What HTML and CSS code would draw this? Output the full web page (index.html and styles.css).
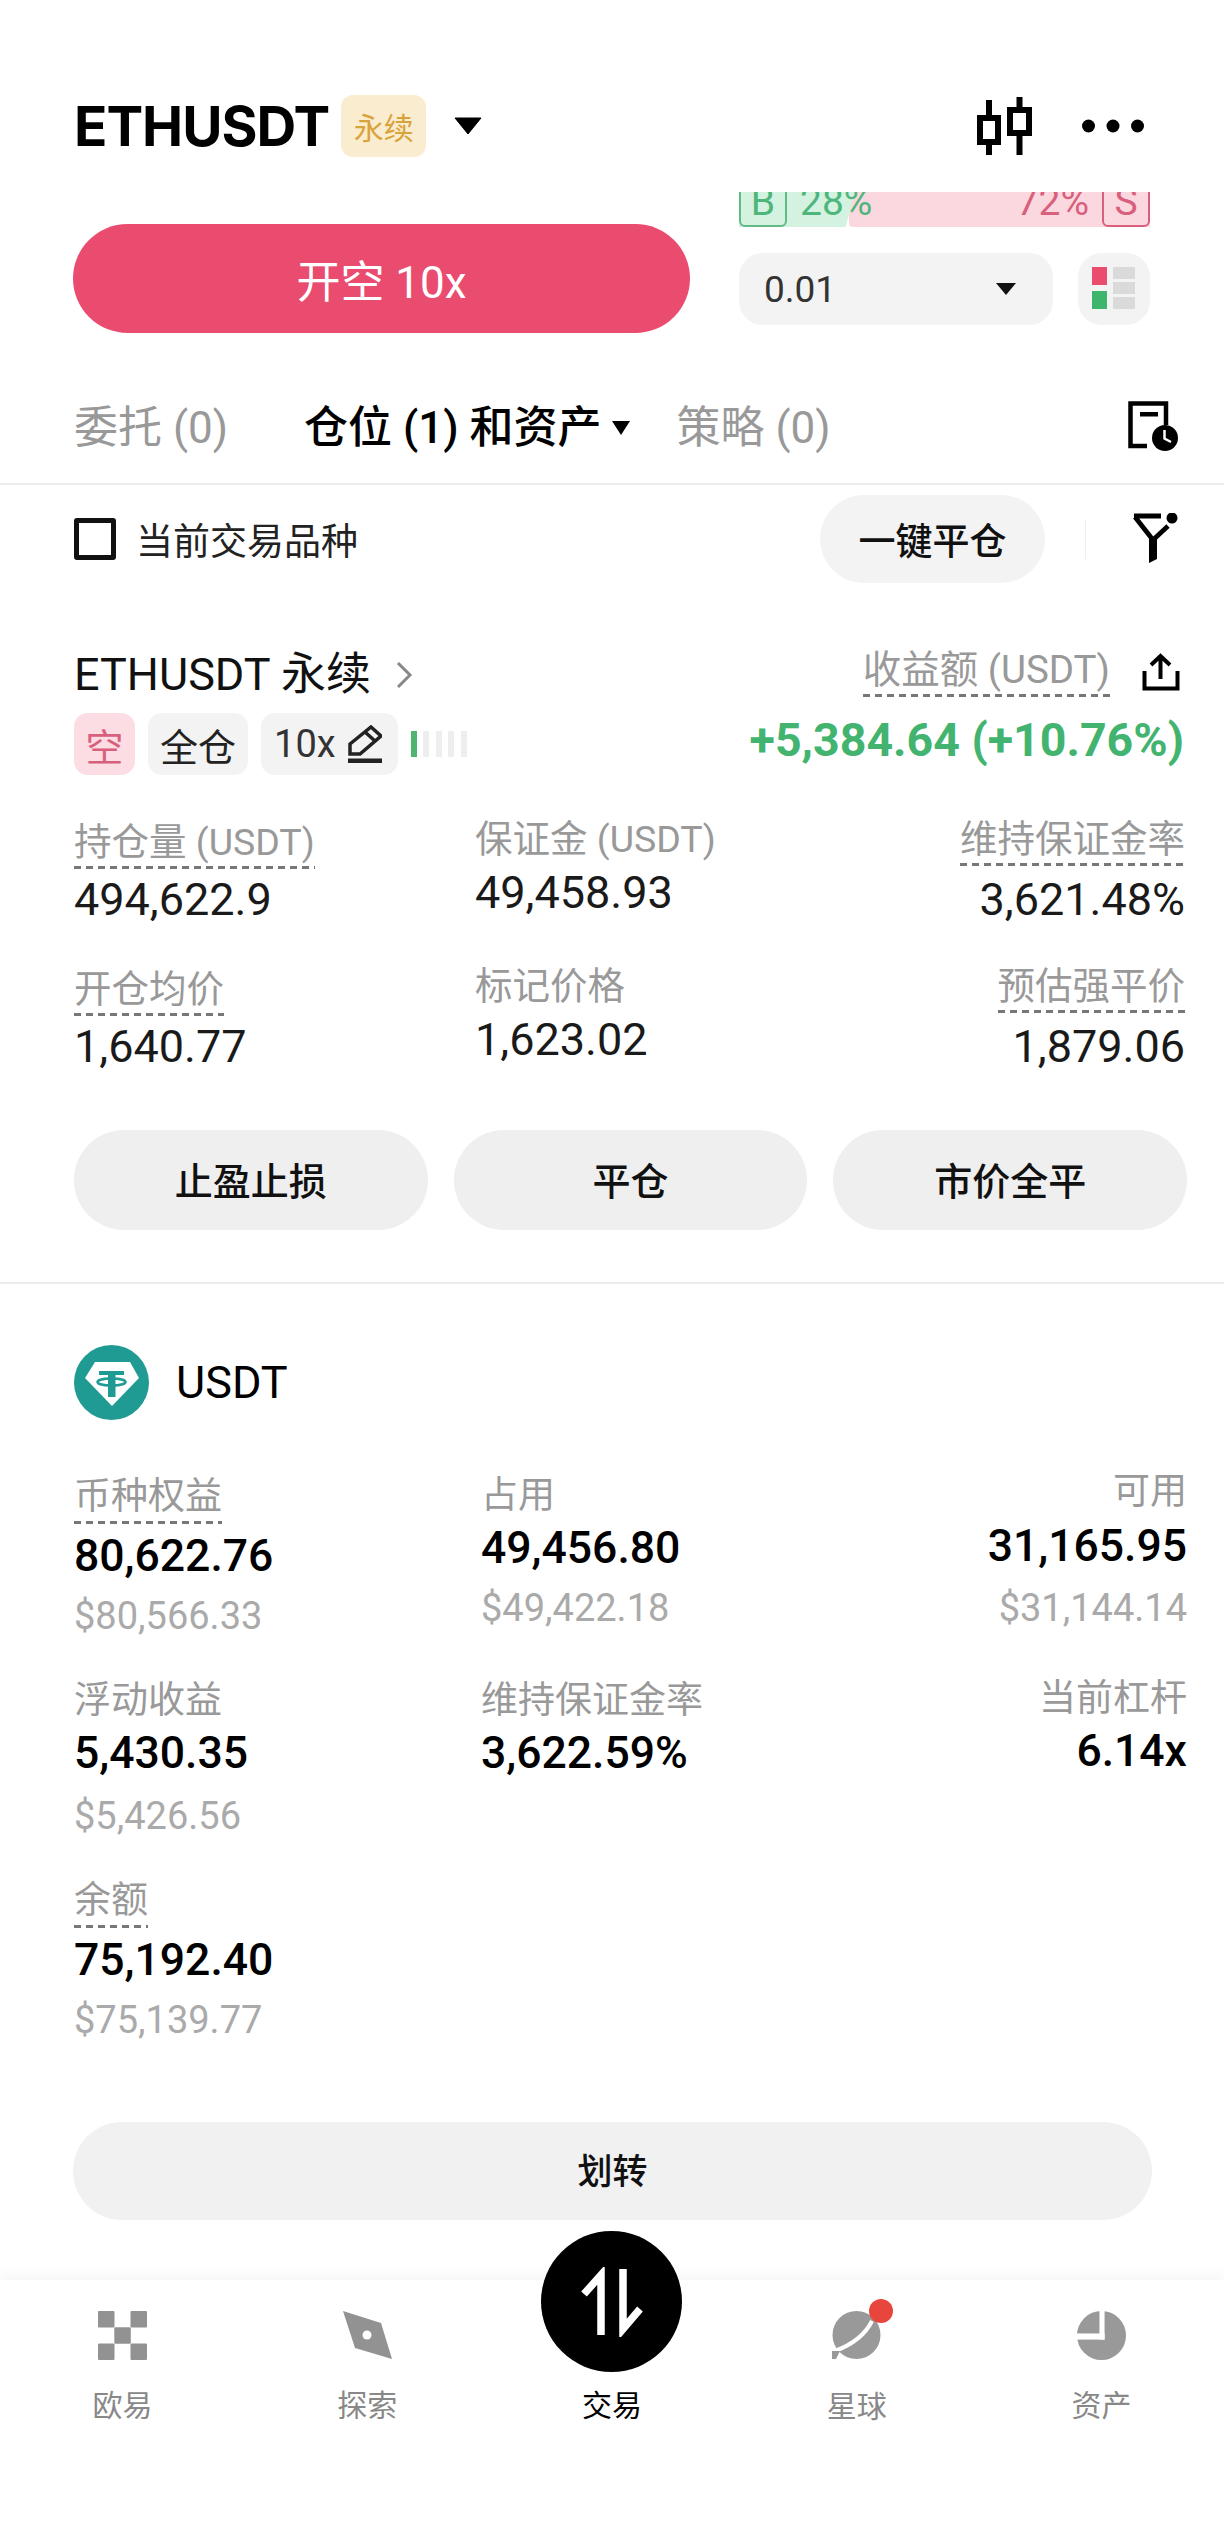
FILE: index.html
```html
<!DOCTYPE html>
<html lang="zh-CN">
<head>
<meta charset="utf-8">
<title>ETHUSDT 永续</title>
<link rel="stylesheet" href="styles.css">
</head>
<body>
<main class="page">
  <header class="top">
    <div class="top-left">
      <h1 class="symbol">ETHUSDT</h1>
      <span class="perp-badge">永续</span>
      <svg class="caret-lg" viewBox="0 0 28 18"><path d="M1 1H27L14 17Z" fill="#000" stroke="#000" stroke-linejoin="round"/></svg>
    </div>
    <div class="top-right">
      <svg class="ic-candle" viewBox="0 0 55 58" fill="none" stroke="#000" stroke-width="6"><rect x="3" y="21" width="18" height="24"/><path d="M12 3V18M12 48V58"/><rect x="33" y="13" width="19" height="23"/><path d="M42.500 0V10M42.500 39V58"/></svg>
      <svg class="ic-more" viewBox="0 0 62 14" fill="#000"><circle cx="6.500" cy="7" r="6.500"/><circle cx="31" cy="7" r="6.500"/><circle cx="55.500" cy="7" r="6.500"/></svg>
    </div>
  </header>

  <section class="order">
    <button class="open-short">开空 10x</button>
    <div class="order-side">
      <div class="depth">
        <div class="depth-fills"><span class="fill-buy"></span><span class="fill-sell"></span></div>
        <div class="depth-labels">
          <div class="depth-group buy"><span class="depth-box">B</span><span>28%</span></div>
          <div class="depth-group sell"><span>72%</span><span class="depth-box">S</span></div>
        </div>
      </div>
      <div class="order-controls">
        <div class="qty"><span>0.01</span><svg class="caret-sm" viewBox="0 0 20 12"><path d="M0 0H20L10 12Z" fill="#111"/></svg></div>
        <div class="book-toggle">
          <div class="book-col"><i class="bk red"></i><i class="bk green"></i></div>
          <div class="book-col grey"><i></i><i></i><i></i></div>
        </div>
      </div>
    </div>
  </section>

  <nav class="tabs">
    <span class="tab">委托 (0)</span>
    <span class="tab active">仓位 (1) 和资产<svg class="caret-xs" viewBox="0 0 18 14"><path d="M0 0H18L9 14Z" fill="#000"/></svg></span>
    <span class="tab">策略 (0)</span>
    <svg class="ic-history" viewBox="0 0 52 50"><path d="M38 24V2.500H2.500V45H19" fill="none" stroke="#000" stroke-width="4.500"/><rect x="12" y="11" width="18" height="4.500" fill="#000"/><circle cx="37" cy="37" r="13" fill="#000"/><path d="M36.500 29V37.500L43 41" fill="none" stroke="#fff" stroke-width="2.500"/></svg>
  </nav>

  <section class="filter-row">
    <label class="check"><span class="box"></span>当前交易品种</label>
    <div class="filter-actions">
      <button class="pill">一键平仓</button>
      <span class="vrule"></span>
      <svg class="ic-filter" viewBox="0 0 46 52" fill="#000"><path d="M2 3H29M3 4L21 27L36 13" fill="none" stroke="#000" stroke-width="4.800"/><path d="M17 26H25V46L17 50Z"/><circle cx="40" cy="5" r="5.500"/></svg>
    </div>
  </section>

  <section class="position">
    <div class="pos-head">
      <div class="pos-name">ETHUSDT 永续<svg class="chev" viewBox="0 0 18 28"><path d="M3 2L15 14L3 26" fill="none" stroke="#888" stroke-width="3"/></svg></div>
      <div class="pos-pnl-label"><span class="dashed">收益额 (USDT)</span><svg class="ic-share" viewBox="0 0 38 38" fill="none" stroke="#000" stroke-width="4"><path d="M18.500 3V26M9 12L18.500 3L28 12M2.500 18V35.500H35.500V18"/></svg></div>
    </div>
    <div class="pos-tags-row">
      <div class="tags">
        <span class="tag short">空</span>
        <span class="tag">全仓</span>
        <span class="tag lev">10x<svg class="ic-pen" viewBox="0 0 34 38"><path d="M23 2L33 11L12 29H2V19Z M17 7L27 16" fill="none" stroke="#222" stroke-width="3.500"/><rect y="33.500" width="34" height="4.500" fill="#222"/></svg></span>
        <span class="meter"><i class="on"></i><i></i><i></i><i></i><i></i></span>
      </div>
      <div class="pnl">+5,384.64 (+10.76%)</div>
    </div>

    <div class="pos-stats">
      <div class="stat"><div class="label"><span class="dashed">持仓量 (USDT)</span></div><div class="value">494,622.9</div></div>
      <div class="stat mid"><div class="label">保证金 (USDT)</div><div class="value">49,458.93</div></div>
      <div class="stat end"><div class="label"><span class="dashed">维持保证金率</span></div><div class="value">3,621.48%</div></div>
      <div class="stat"><div class="label"><span class="dashed">开仓均价</span></div><div class="value">1,640.77</div></div>
      <div class="stat mid"><div class="label">标记价格</div><div class="value">1,623.02</div></div>
      <div class="stat end"><div class="label"><span class="dashed">预估强平价</span></div><div class="value">1,879.06</div></div>
    </div>

    <div class="pos-actions">
      <button class="action">止盈止损</button>
      <button class="action">平仓</button>
      <button class="action">市价全平</button>
    </div>
  </section>

  <section class="asset">
    <div class="asset-head">
      <svg class="usdt-logo" viewBox="0 0 75 75"><circle cx="37.500" cy="37.500" r="37.500" fill="#1f9b93"/><path d="M11 33L21 17H56L65 33L38 61Z" fill="#fff"/><path d="M25 26H50V30H41.500V52H34V30H25Z" fill="#1f9b93"/><ellipse cx="37.500" cy="37" rx="14" ry="3.500" fill="none" stroke="#1f9b93" stroke-width="2.500"/></svg>
      <span class="asset-name">USDT</span>
    </div>
    <div class="asset-stats">
      <div class="astat"><div class="label"><span class="dashed">币种权益</span></div><div class="value">80,622.76</div><div class="sub">$80,566.33</div></div>
      <div class="astat a-mid"><div class="label">占用</div><div class="value">49,456.80</div><div class="sub">$49,422.18</div></div>
      <div class="astat a-end"><div class="label">可用</div><div class="value">31,165.95</div><div class="sub">$31,144.14</div></div>
      <div class="astat a-low"><div class="label">浮动收益</div><div class="value">5,430.35</div><div class="sub">$5,426.56</div></div>
      <div class="astat a-low"><div class="label">维持保证金率</div><div class="value">3,622.59%</div></div>
      <div class="astat a-low a-lev"><div class="label">当前杠杆</div><div class="value">6.14x</div></div>
      <div class="astat"><div class="label"><span class="dashed">余额</span></div><div class="value">75,192.40</div><div class="sub">$75,139.77</div></div>
    </div>
    <button class="transfer">划转</button>
  </section>

  <footer class="bottom-nav">
    <div class="nav-item">
      <svg class="nav-ic" viewBox="0 0 49 49" fill="#929292"><rect width="16.500" height="16.500" rx="1"/><rect x="32.500" width="16.500" height="16.500" rx="1"/><rect x="16.300" y="16.300" width="16.500" height="16.500" rx="1"/><rect y="32.500" width="16.500" height="16.500" rx="1"/><rect x="32.500" y="32.500" width="16.500" height="16.500" rx="1"/></svg>
      <span>欧易</span>
    </div>
    <div class="nav-item">
      <svg class="nav-ic" viewBox="0 0 49 49"><path d="M0 0L38 12L49 48L12 37Z" fill="#929292"/><circle cx="24" cy="24" r="4.500" fill="#fff"/></svg>
      <span>探索</span>
    </div>
    <div class="nav-item current">
      <div class="fab"><svg class="fab-ic" viewBox="0 0 64 70" fill="none" stroke="#fff" stroke-width="7.500"><path d="M21 68V8L4 27M43 2V62L60 42"/></svg></div>
      <div class="nav-spacer"></div>
      <span>交易</span>
    </div>
    <div class="nav-item">
      <svg class="nav-ic planet" viewBox="0 0 62 62"><circle cx="24.500" cy="36" r="24" fill="#999"/><path d="M40 22Q30 42 3 52" fill="none" stroke="#fff" stroke-width="4"/><path d="M0 52L8 52L4 60H0Z" fill="#999"/><circle cx="49" cy="12" r="12" fill="#e8453c"/></svg>
      <span>星球</span>
    </div>
    <div class="nav-item">
      <svg class="nav-ic" viewBox="0 0 48 48"><circle cx="24" cy="24" r="24" fill="#999"/><rect x="22" width="5" height="28" fill="#fff"/><rect y="22" width="27" height="6" fill="#fff"/></svg>
      <span>资产</span>
    </div>
  </footer>
</main>
</body>
</html>
```

FILE: styles.css
```css
* { box-sizing: border-box; }
html, body { margin: 0; padding: 0; background: #fff; }
body { font-family: Roboto, "Noto Sans CJK SC", sans-serif; color: #111; }
button { font: inherit; border: 0; padding: 0; color: inherit; }
svg { display: block; flex: none; }

.page { width: 1224px; height: 2532px; overflow: hidden; display: flex; flex-direction: column; background: #fff; }

/* Header */
.top { height: 62px; margin-top: 95px; padding: 0 80px 0 74px; display: flex; justify-content: space-between; align-items: center; }
.top-left { display: flex; align-items: center; }
.symbol { margin: 0; font-family: Inter, "Noto Sans CJK SC", sans-serif; font-size: 55px; font-weight: 700; line-height: 62px; letter-spacing: -1px; color: #000; }
.perp-badge { width: 85px; height: 62px; margin-left: 12px; border-radius: 12px; background: #faeccf; color: #d9a33c; font-size: 30px; display: flex; align-items: center; justify-content: center; }
.caret-lg { width: 28px; height: 18px; margin-left: 28px; }
.top-right { display: flex; align-items: center; gap: 50px; }
.ic-candle { width: 55px; height: 58px; }
.ic-more { width: 62px; height: 14px; }

/* Order */
.order { margin-top: 35px; padding: 0 74px 0 73px; display: flex; justify-content: space-between; height: 141px; }
.open-short { width: 617px; height: 109px; margin-top: 32px; border-radius: 55px; background: #ea4c6f; color: #fff; font-size: 44px; }
.order-side { width: 411px; display: flex; flex-direction: column; }
.depth { position: relative; height: 35px; overflow: hidden; }
.depth-fills { display: flex; height: 100%; }
.fill-buy { width: 116px; background: #d3f2df; clip-path: polygon(0 0, 100% 0, 92% 100%, 0 100%); }
.fill-sell { flex: 1; margin-left: -6px; background: #fbd8df; border-radius: 0 0 0 4px; }
.depth-labels { position: absolute; left: 0; right: 0; bottom: 0; display: flex; justify-content: space-between; align-items: flex-end; font-size: 39px; line-height: 42px; }
.depth-group { display: flex; align-items: flex-end; gap: 13px; }
.depth-group span { display: block; height: 46px; }
.depth-box { width: 48px; text-align: center; border: 2.5px solid; border-radius: 6px; line-height: 38px; }
.buy { color: #4eb57c; }
.buy .depth-box { border-color: #62b986; }
.sell { color: #d9607c; }
.sell .depth-box { border-color: #d9607c; }
.order-controls { margin-top: 26px; display: flex; justify-content: space-between; }
.qty { width: 314px; height: 72px; padding: 0 37px 0 25px; border-radius: 24px; background: #f3f3f3; color: #333; font-size: 37px; display: flex; justify-content: space-between; align-items: center; }
.caret-sm { width: 20px; height: 12px; }
.book-toggle { width: 72px; height: 72px; padding: 14px; border-radius: 24px; background: #f3f3f3; display: flex; gap: 6px; }
.book-col { width: 15px; display: flex; flex-direction: column; gap: 6px; }
.bk { display: block; height: 18px; }
.red { background: #ea4c6f; }
.green { background: #3eb56d; }
.book-col.grey { width: 22px; gap: 3px; }
.book-col.grey i { display: block; height: 12px; background: #dadada; }

/* Tabs */
.tabs { margin-top: 70px; height: 82px; padding: 0 44px 31px 74px; border-bottom: 2px solid #ebebeb; display: flex; align-items: center; position: relative; }
.tab { font-size: 44px; line-height: 48px; color: #999; white-space: nowrap; display: flex; align-items: center; }
.tab.active { color: #000; margin-left: 76px; font-weight: 500; }
.tab + .tab + .tab { margin-left: 47px; }
.caret-xs { width: 18px; height: 14px; margin-left: 10px; }
.ic-history { width: 52px; height: 50px; margin: -4px 0 0 auto; }

/* Filter row */
.filter-row { height: 88px; margin-top: 10px; padding: 0 46px 0 74px; display: flex; justify-content: space-between; align-items: center; }
.check { display: flex; align-items: center; font-size: 37px; color: #222; }
.box { width: 42px; height: 42px; margin-right: 20px; border: 5px solid #111; border-radius: 3px; }
.filter-actions { display: flex; align-items: center; }
.pill { width: 225px; height: 88px; border-radius: 44px; background: #f3f3f3; font-size: 37px; font-weight: 500; color: #111; }
.vrule { width: 1px; height: 40px; margin: 0 46px 0 40px; background: #f0f0f0; }
.ic-filter { width: 46px; height: 52px; }

/* Position */
.position { margin-top: 65px; padding: 0 37px 0 74px; }
.pos-head { height: 47px; padding-right: 7px; display: flex; justify-content: space-between; align-items: center; }
.pos-name { padding-top: 6px; font-size: 45px; line-height: 46px; font-weight: 400; color: #111; display: flex; align-items: center; }
.chev { width: 18px; height: 28px; margin-left: 24px; }
.pos-pnl-label { font-size: 38.500px; line-height: 44px; color: #999; display: flex; align-items: center; gap: 32px; }
.pos-pnl-label .dashed { padding-top: 2px; }
.ic-share { width: 38px; height: 38px; }
.dashed { display: inline-block; padding-bottom: 5px; background: linear-gradient(to right, #777 60%, transparent 0) left bottom / 12px 3px repeat-x; }
.pos-tags-row { margin-top: 18px; padding-right: 3px; display: flex; justify-content: space-between; align-items: center; }
.tags { display: flex; align-items: center; gap: 13px; }
.tag { height: 62px; padding: 0 12px; border-radius: 14px; background: #f3f3f3; color: #222; font-size: 38px; display: flex; align-items: center; }
.tag.short { background: #fcdde4; color: #d9607c; padding: 0 11.500px; }
.tag.lev { padding: 0 16px 0 13px; gap: 12px; color: #333; }
.ic-pen { width: 34px; height: 38px; }
.meter { display: flex; gap: 6.500px; }
.meter i { display: block; width: 6px; height: 26px; background: #eeeeee; }
.meter i.on { background: #4db56f; }
.pnl { margin-bottom: 8px; color: #43b46f; font-size: 46.500px; font-weight: 700; line-height: 50px; }

.pos-stats { margin-top: 41px; padding-right: 2px; display: grid; grid-template-columns: 401px 1fr 1fr; row-gap: 37px; }
.pos-stats .label { font-size: 37.500px; }
.label { font-size: 37px; line-height: 44px; color: #999; padding: 4px 0 1px; white-space: nowrap; }
.label .dashed { margin-bottom: -5px; }
.value { font-size: 45px; line-height: 52px; margin-top: 9px; color: #1a1a1a; font-weight: 400; white-space: nowrap; }
.stat.mid { margin-top: -3px; }
.stat.mid .value { margin-top: 5px; }
.stat.end { margin-top: -3px; text-align: right; }
.stat.end .value { margin-top: 12px; }

.pos-actions { margin-top: 57px; display: grid; grid-template-columns: repeat(3, 1fr); gap: 26px; }
.action { height: 100px; padding-bottom: 3px; border-radius: 50px; background: #efefef; font-size: 38px; font-weight: 500; color: #111; }

/* Asset */
.asset { margin-top: 52px; padding: 61px 37px 0 74px; border-top: 2px solid #ebebeb; }
.asset-head { height: 75px; display: flex; align-items: center; gap: 27px; }
.usdt-logo { width: 75px; height: 75px; }
.asset-name { font-size: 45px; line-height: 52px; font-weight: 400; color: #000; }
.asset-stats { margin-top: 51px; display: grid; grid-template-columns: 407px 1fr 1fr; row-gap: 35px; }
.astat .value { margin-top: 10px; font-size: 44.500px; font-weight: 500; color: #000; }
.sub { margin-top: 10px; font-size: 38px; line-height: 48px; color: #aaa; white-space: nowrap; }
.a-mid { margin-top: -1px; }
.astat.a-mid .value { margin-top: 3px; }
.a-end { margin-top: -5px; text-align: right; }
.astat.a-end .value { margin-top: 5px; }
.a-end .sub { margin-top: 12px; }
.astat.a-low .value { margin-top: 3px; }
.a-low .sub { margin-top: 13px; }
.a-lev { margin-top: -2px; text-align: right; }
.transfer { display: block; width: 1079px; height: 98px; margin: 78px 0 0 -1px; padding-bottom: 5px; border-radius: 49px; background: #f1f1f1; font-size: 35px; font-weight: 500; color: #111; }

/* Bottom nav */
.bottom-nav { flex: 1; margin-top: 60px; padding-top: 31px; display: grid; grid-template-columns: repeat(5, 1fr); align-items: start; background: #fff; box-shadow: 0 -6px 12px rgba(0, 0, 0, .035); }
.nav-item { position: relative; display: flex; flex-direction: column; align-items: center; font-size: 30px; line-height: 40px; color: #888; }
.nav-ic { width: 49px; height: 49px; margin-bottom: 26px; }
.nav-ic.planet { width: 62px; height: 62px; margin: -12px 0 26px 13px; }
.nav-spacer { height: 75px; }
.current { color: #000; }
.fab { position: absolute; top: -80px; left: 50%; margin-left: -70.500px; width: 141px; height: 141px; border-radius: 50%; background: #000; display: flex; align-items: center; justify-content: center; }
.fab-ic { width: 64px; height: 70px; }
```
